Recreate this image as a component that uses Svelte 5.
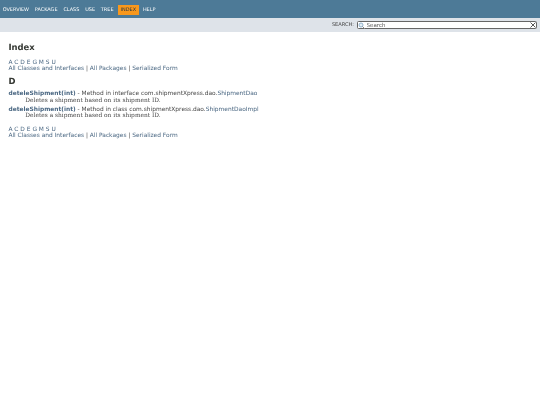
<script>
	const letters = ['A', 'C', 'D', 'E', 'G', 'M', 'S', 'U'];
	const navItems = ['OVERVIEW', 'PACKAGE', 'CLASS', 'USE', 'TREE', 'INDEX', 'HELP'];
	const entries = [
		{ kind: 'interface', cls: 'ShipmentDao' },
		{ kind: 'class', cls: 'ShipmentDaoImpl' }
	];
</script>

{#snippet indexLinks()}
	<div class="letters">
		{#each letters as l (l)}<a href="#{l}">{l}</a>{' '}{/each}
	</div>
	<div class="all">
		<a href="#all">All Classes and Interfaces</a> | <a href="#pkg">All Packages</a> | <a href="#ser">Serialized Form</a>
	</div>
{/snippet}

<div class="page">
	<header>
		<nav class="top">
			{#each navItems as item (item)}
				<span class="item" class:active={item === 'INDEX'}>{item}</span>
			{/each}
		</nav>
		<div class="sub">
			<label for="q">SEARCH:</label>
			<div class="search">
				<svg class="glass" viewBox="0 0 8 8" width="8" height="8">
					<circle cx="3" cy="3" r="2" fill="#e4eef5" stroke="#7ba3c4" stroke-width="0.8" />
					<path d="M4.5 4.5 7 7" stroke="#8a8a8a" stroke-width="1" />
				</svg>
				<input id="q" placeholder="Search" />
				<svg class="clear" viewBox="0 0 6 6" width="6" height="6">
					<path d="M0.5 0.5 5.5 5.5M5.5 0.5 0.5 5.5" stroke="#444" stroke-width="0.9" />
				</svg>
			</div>
		</div>
	</header>

	<main>
		<h1>Index</h1>
		{@render indexLinks()}
		<h2>D</h2>
		<dl>
			{#each entries as e (e.cls)}
				<dt>
					<a class="member" href="#m">deteleShipment(int)</a> - Method in {e.kind} com.shipmentXpress.dao.<a href="#c">{e.cls}</a>
				</dt>
				<dd>Deletes a shipment based on its shipment ID.</dd>
			{/each}
		</dl>
		{@render indexLinks()}
	</main>
</div>

<style>
	:global(body) {
		margin: 0;
		background: #fff;
		color: #474747;
		font-family: 'DejaVu Sans', sans-serif;
		font-size: 5.906px;
	}
	/* the reference is a 1280px page shrunk to 540px, so sizes are 0.42x and soft */
	.page {
		min-height: 405px;
		background: #fff;
		text-rendering: geometricPrecision;
		filter: blur(0.35px);
	}
	.top {
		height: 18px;
		box-sizing: border-box;
		background: #4d7a97;
		display: flex;
		align-items: center;
		padding: 1px 0 0 2.7px;
		gap: 5.8px;
		color: #fff;
		font-size: 4.95px;
	}
	.item {
		padding: 2px 0;
		line-height: 6px;
	}
	.active {
		background: #f8981d;
		color: #253441;
		padding: 2px 2.5px;
		margin: 0 -1.5px 0 -1.2px;
	}
	.sub {
		height: 14px;
		background: #dee3e9;
		display: flex;
		align-items: center;
		justify-content: flex-end;
		gap: 3px;
		font-size: 5.06px;
		padding-right: 3px;
	}
	.search {
		position: relative;
		width: 180px;
		height: 8px;
		box-sizing: border-box;
		background: #fff;
		border: 1px solid #666;
		border-radius: 1.5px;
		display: flex;
		align-items: center;
		padding-left: 8.5px;
	}
	.glass {
		position: absolute;
		left: 0;
		top: -0.5px;
	}
	.clear {
		position: absolute;
		right: 0;
		top: 0;
	}
	input {
		border: 0;
		outline: 0;
		padding: 0;
		width: 160px;
		height: 6px;
		font: 5.5px 'DejaVu Sans', sans-serif;
		background: transparent;
	}
	input::placeholder {
		color: #555;
	}
	main {
		padding: 10px 8.44px 0;
		line-height: 7px;
	}
	h1 {
		font-size: 8.44px;
		line-height: 11px;
		margin: 0 0 6.5px;
		color: #353833;
	}
	h2 {
		font-size: 8.44px;
		line-height: 10px;
		margin: 2.8px 0 5.5px;
		color: #353833;
	}
	a {
		color: #4a6782;
		text-decoration: none;
	}
	.letters {
		line-height: 6.5px;
	}
	dl {
		margin: 0 0 6.5px;
	}
	dt {
		margin-top: 2.2px;
		line-height: 6.5px;
		white-space: nowrap;
	}
	.member {
		font-weight: bold;
	}
	dd {
		margin: 0 0 0 16.9px;
		font-family: 'DejaVu Serif', serif;
	}
</style>
